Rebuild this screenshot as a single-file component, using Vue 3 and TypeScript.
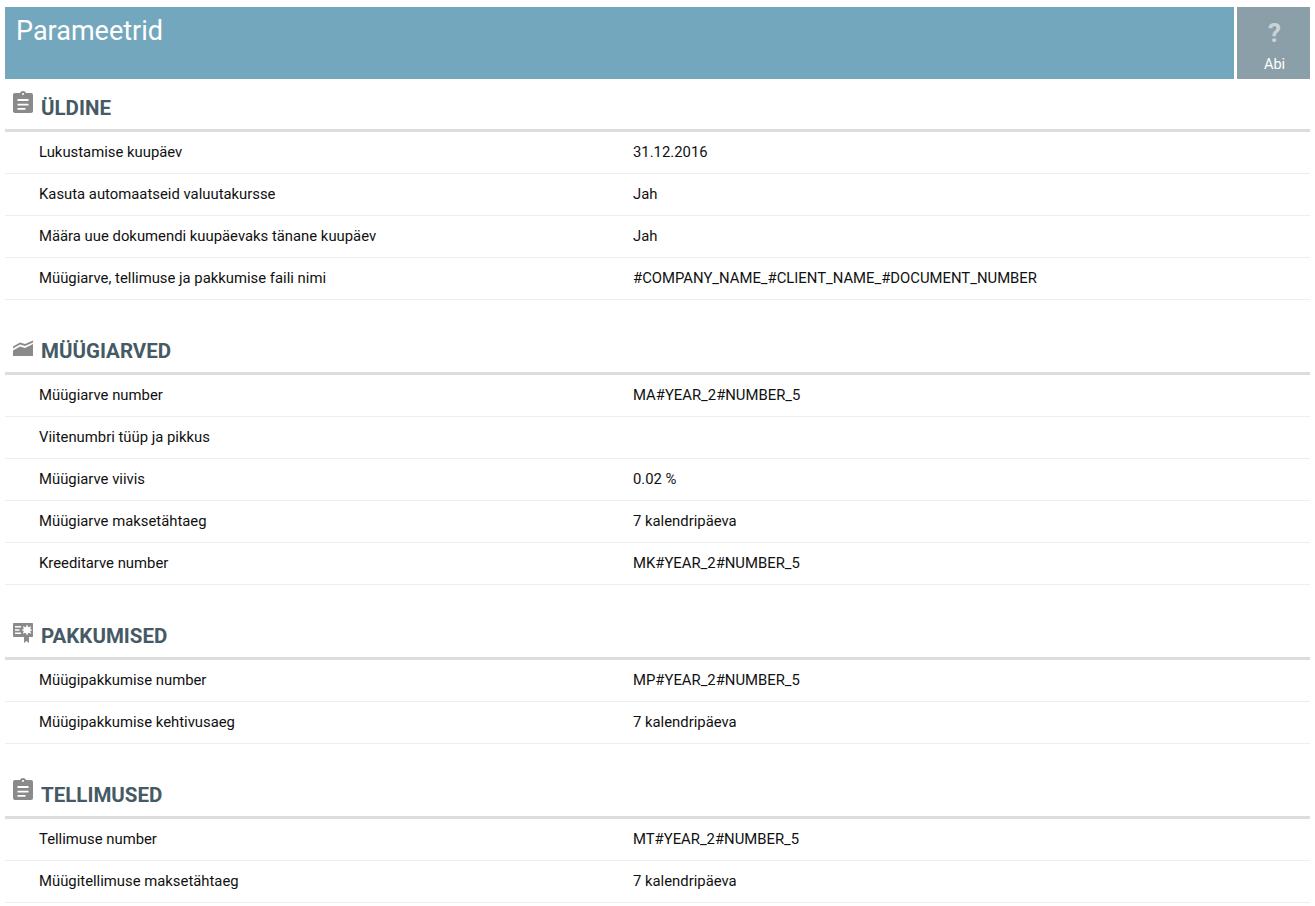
<template>
  <div class="page">
    <header class="top">
      <h1 class="title">Parameetrid</h1>
      <button class="help">
        <span class="help-mark">?</span>
        <span class="help-label">Abi</span>
      </button>
    </header>

    <section v-for="section in sections" :key="section.name" class="section">
      <h2 class="section-head">
        <svg class="section-icon" viewBox="0 0 20 24" width="20" height="24">
          <path :d="icons[section.icon]" fill="#8a8a8a" fill-rule="evenodd" />
        </svg>
        <span>{{ section.name }}</span>
      </h2>
      <div v-for="row in section.rows" :key="row[0]" class="row">
        <div class="row-label">{{ row[0] }}</div>
        <div class="row-value">{{ row[1] }}</div>
      </div>
    </section>
  </div>
</template>

<script setup lang="ts">
type IconName = 'clipboard' | 'chart' | 'offer'

const icons: Record<IconName, string> = {
  clipboard:
    'M2 2h5c.4-1.200 1.600-2 3-2s2.600.8 3 2h5c1.100 0 2 .9 2 2v16c0 1.100-.9 2-2 2H2c-1.100 0-2-.9-2-2V4c0-1.100.9-2 2-2zM10 2a1 1 0 1 0 0 2 1 1 0 0 0 0-2zM4.500 8v2h11V8zM4.500 12.800v1.700h11v-1.700zM4.500 17v1.700H12.500V17z',
  chart:
    'M0 12.500 7 8.500l5 1.500 8-3.500v2l-8 3.500-5-1.500-7 4zM0 16.500l7-4 5 1.500 8-4V22H0z',
  offer:
    'M1 4h18c.6 0 1 .4 1 1v12c0 .6-.4 1-1 1h-3v6l-2.500-2-2.500 2v-6H1c-.6 0-1-.4-1-1V5c0-.6.4-1 1-1zM2 7v1.500h6V7zM2 10.200v1.500h4.500v-1.500zM2 13.500V15h6v-1.500zM14 5.500l-1.300 2.700-2.900-1 1 2.800-2.300 1 2.300 1-1 2.800 2.900-1 1.300 2.700 1.300-2.700 2.900 1-1-2.800 2.300-1-2.300-1 1-2.800-2.900 1z'
}

const sections: { name: string; icon: IconName; rows: [string, string][] }[] = [
  {
    name: 'ÜLDINE',
    icon: 'clipboard',
    rows: [
      ['Lukustamise kuupäev', '31.12.2016'],
      ['Kasuta automaatseid valuutakursse', 'Jah'],
      ['Määra uue dokumendi kuupäevaks tänane kuupäev', 'Jah'],
      ['Müügiarve, tellimuse ja pakkumise faili nimi', '#COMPANY_NAME_#CLIENT_NAME_#DOCUMENT_NUMBER']
    ]
  },
  {
    name: 'MÜÜGIARVED',
    icon: 'chart',
    rows: [
      ['Müügiarve number', 'MA#YEAR_2#NUMBER_5'],
      ['Viitenumbri tüüp ja pikkus', ''],
      ['Müügiarve viivis', '0.02 %'],
      ['Müügiarve maksetähtaeg', '7 kalendripäeva'],
      ['Kreeditarve number', 'MK#YEAR_2#NUMBER_5']
    ]
  },
  {
    name: 'PAKKUMISED',
    icon: 'offer',
    rows: [
      ['Müügipakkumise number', 'MP#YEAR_2#NUMBER_5'],
      ['Müügipakkumise kehtivusaeg', '7 kalendripäeva']
    ]
  },
  {
    name: 'TELLIMUSED',
    icon: 'clipboard',
    rows: [
      ['Tellimuse number', 'MT#YEAR_2#NUMBER_5'],
      ['Müügitellimuse maksetähtaeg', '7 kalendripäeva']
    ]
  }
]
</script>

<style>
html,
body {
  background: #fff;
  overflow: hidden;
}
</style>

<style scoped>
.page {
  padding: 7px 5px 0;
  font-family: Roboto, sans-serif;
  font-size: 14.85px;
  color: #111;
}

.top {
  display: flex;
  gap: 3px;
  height: 72px;
}

.title {
  flex: 1;
  margin: 0;
  padding: 8px 11px 0;
  background: #73a7bd;
  color: #fff;
  font-size: 27px;
  font-weight: 400;
  line-height: 33px;
}

.help {
  width: 73px;
  padding: 0 0 0 2px;
  border: none;
  background: #8b9fa8;
  display: flex;
  flex-direction: column;
  align-items: center;
  font-family: inherit;
}

.help-mark {
  margin-top: 12px;
  font-size: 26px;
  font-weight: 700;
  line-height: 28px;
  color: #c9d3d8;
}

.help-label {
  margin-top: 9px;
  font-size: 14.5px;
  line-height: 18px;
  color: #fff;
}

.section {
  margin-bottom: 22px;
}

.section-head {
  display: flex;
  align-items: center;
  gap: 8px;
  height: 53px;
  margin: 0;
  padding: 8px 0 0 8px;
  box-sizing: border-box;
  border-bottom: 3px solid #ddd;
  font-size: 20.5px;
  font-weight: 700;
  color: #455a64;
}

.section-icon {
  flex-shrink: 0;
  align-self: flex-start;
  margin-top: 4px;
}

.row {
  display: flex;
  height: 42px;
  padding-bottom: 2px;
  box-sizing: border-box;
  align-items: center;
  border-bottom: 1px solid #eee;
}

.row-label {
  width: 628px;
  padding-left: 34px;
  box-sizing: border-box;
}
</style>
